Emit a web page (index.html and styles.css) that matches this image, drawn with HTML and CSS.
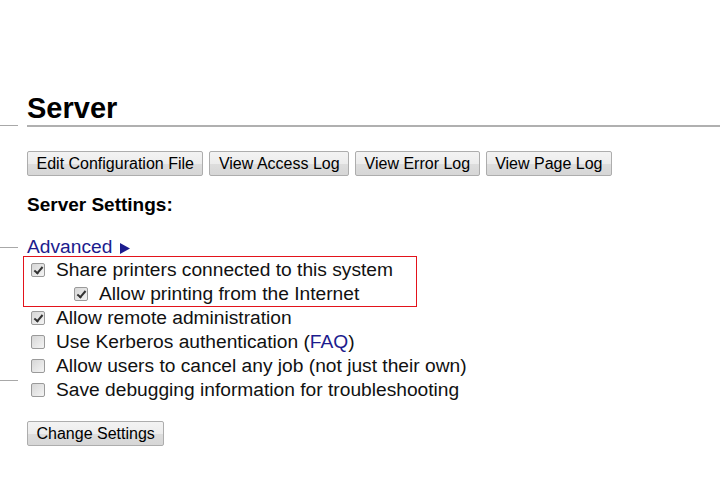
FILE: index.html
```html
<!DOCTYPE html>
<html lang="en">
<head>
    <meta charset="UTF-8">
    <meta name="viewport" content="width=device-width, initial-scale=1.0">
    <title>Server - CUPS</title>
    <link rel="stylesheet" href="styles.css">
</head>
<body>
    <div class="side">
        <div class="side-line first"></div>
        <div class="side-line second"></div>
        <div class="side-line third"></div>
    </div>

    <div class="main">
        <h1>Server</h1>

        <div class="button-row">
            <button>Edit Configuration File</button>
            <button>View Access Log</button>
            <button>View Error Log</button>
            <button>View Page Log</button>
        </div>

        <h2>Server Settings:</h2>

        <div class="advanced-row">
            <a class="advanced" href="#">Advanced</a>
            <svg class="arrow" width="10" height="11" viewBox="0 0 10 11"><polygon points="0,0 10,5.5 0,11" fill="#1c1c8e"/></svg>
        </div>

        <div class="highlight">
            <label class="row"><input type="checkbox" checked> Share printers connected to this system</label>
            <label class="row indent"><input type="checkbox" checked> Allow printing from the Internet</label>
        </div>
        <label class="row"><input type="checkbox" checked> Allow remote administration</label>
        <label class="row"><input type="checkbox"> Use Kerberos authentication (<a href="#">FAQ</a>)</label>
        <label class="row"><input type="checkbox"> Allow users to cancel any job (not just their own)</label>
        <label class="row"><input type="checkbox"> Save debugging information for troubleshooting</label>

        <div class="submit-row">
            <button>Change Settings</button>
        </div>
    </div>
</body>
</html>
```

FILE: styles.css
```css
body {
    margin: 0;
    background: white;
    color: #111;
    font-family: "Liberation Sans", Arial, sans-serif;
    display: flex;
}

/* left side leftovers of the nav table */
.side {
    width: 18px;
    flex-shrink: 0;
}
.side-line {
    height: 1px;
    background: #a8a8a8;
}
.side-line.first { margin-top: 125px; }
.side-line.second { margin-top: 121px; }
.side-line.third { margin-top: 132px; }

.main {
    flex: 1;
    padding-left: 9px;
    padding-top: 91px;
}

h1 {
    margin: 0;
    font-size: 29px;
    line-height: 34px;
    font-weight: bold;
    color: #000;
    border-bottom: 2px solid #b0b0b0;
}

.button-row {
    margin-top: 24px;
    display: flex;
    gap: 6px;
}

button {
    height: 25px;
    padding: 0 8.5px;
    font-family: "Liberation Sans", Arial, sans-serif;
    font-size: 16px;
    color: #000;
    border: 1px solid #adadad;
    border-radius: 2px;
    background: linear-gradient(#f3f3f3 0%, #ececec 50%, #dddddd 51%, #d6d6d6 100%);
    cursor: pointer;
}

h2 {
    margin: 17px 0 0;
    font-size: 19px;
    line-height: 24px;
    font-weight: bold;
    color: #000;
}

.advanced-row {
    margin-top: 18px;
    display: flex;
    align-items: center;
    height: 24px;
}
.advanced {
    font-size: 19.2px;
    line-height: 24px;
    color: #1c1c8e;
    text-decoration: none;
}
.arrow {
    margin: 3px 0 0 8px;
}

.highlight {
    width: fit-content;
    border: 1px solid #e3131b;
    margin: -3px 0 -1px -4px;
    padding: 1px 23px 0 3px;
}

.row {
    display: flex;
    align-items: center;
    font-size: 19.2px;
    line-height: 24px;
    height: 24px;
}
.row.indent {
    padding-left: 43px;
}
.row a {
    color: #1c1c8e;
    text-decoration: none;
}

input[type="checkbox"] {
    appearance: none;
    -webkit-appearance: none;
    width: 14px;
    height: 14px;
    margin: 0 11px 0 4px;
    border: 1px solid #9a9a9a;
    border-radius: 2px;
    background: linear-gradient(135deg, #d6d6d6, #f4f4f4);
    position: relative;
    flex-shrink: 0;
}
input[type="checkbox"]:checked::after {
    content: "";
    position: absolute;
    left: 4px;
    top: 1px;
    width: 3px;
    height: 7px;
    border: solid #333;
    border-width: 0 2.5px 2.5px 0;
    transform: rotate(40deg);
}

.submit-row {
    margin-top: 19px;
}
```
